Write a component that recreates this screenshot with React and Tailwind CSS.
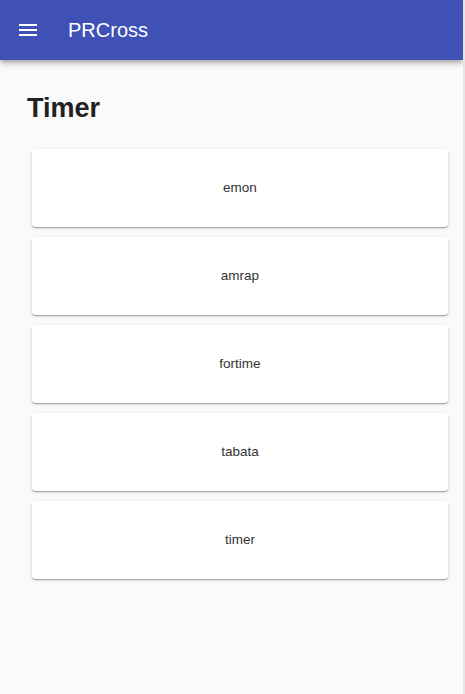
import React from "react";

const items = ["emon", "amrap", "fortime", "tabata", "timer"];

export default function App() {
  return (
    <div className="w-[465px] h-[694px] bg-[#fafafa] border-r-2 border-[#e6e6e6] overflow-hidden" style={{ fontFamily: "'Liberation Sans', Arial, sans-serif" }}>
      <header className="h-[60px] bg-[#3f51b5] flex items-center shadow-[0_2px_4px_-1px_rgba(0,0,0,0.2),0_4px_5px_0_rgba(0,0,0,0.14),0_1px_10px_0_rgba(0,0,0,0.12)] relative">
        <button className="ml-[16px] w-[24px] h-[24px] flex items-center justify-center text-white">
          <svg width="24" height="24" viewBox="0 0 24 24" fill="currentColor">
            <path d="M3 18h18v-2H3v2zm0-5h18v-2H3v2zm0-7v2h18V6H3z" />
          </svg>
        </button>
        <span className="ml-[28px] text-white text-[20px] leading-none">PRCross</span>
      </header>
      <main className="pt-[30px]">
        <h1 className="pl-[27px] text-[27px] font-bold text-[#212121] leading-[36px]">Timer</h1>
        <div className="mt-[23px] ml-[32px] w-[416px] flex flex-col gap-[10px]">
          {items.map((t) => (
            <div key={t} className="h-[78px] bg-white rounded-[4px] flex items-center justify-center text-[13.5px] text-[#333] shadow-[0_1px_3px_0_rgba(0,0,0,0.2),0_1px_1px_0_rgba(0,0,0,0.14),0_2px_1px_-1px_rgba(0,0,0,0.12)]">
              {t}
            </div>
          ))}
        </div>
      </main>
    </div>
  );
}
